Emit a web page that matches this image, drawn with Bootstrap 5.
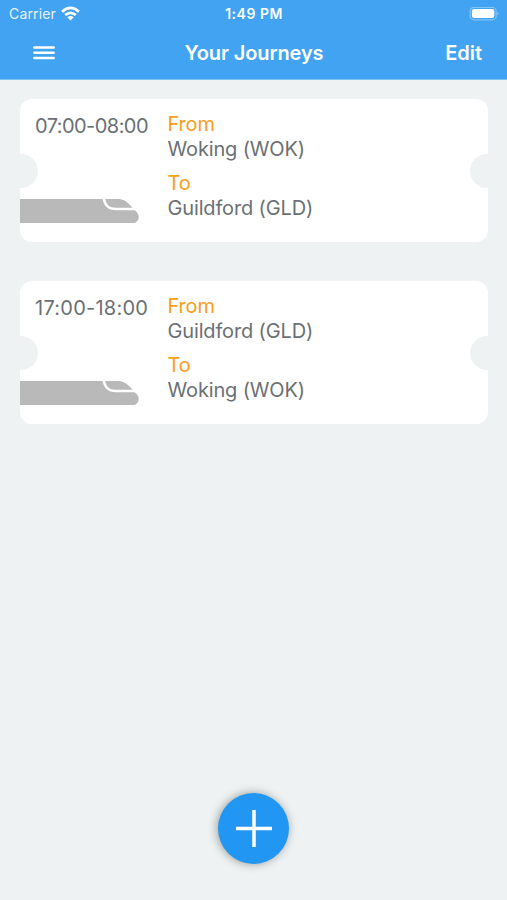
<!DOCTYPE html>
<html lang="en">
<head>
<meta charset="utf-8">
<meta name="viewport" content="width=device-width, initial-scale=1">
<title>Your Journeys</title>
<link href="https://cdn.jsdelivr.net/npm/bootstrap@5.3.0/dist/css/bootstrap.min.css" rel="stylesheet">
<style>
body{font-family:Inter,"Liberation Sans",sans-serif;background:#eef2f3;min-height:900px;color:#6b7074}
.app-header{background:#41a3f2;height:79.5px;border-bottom:1px solid #7fc0f5}
.status-bar{height:27px;padding:0 8px 0 9px;font-size:14px;line-height:27px}
.title-bar{height:51px;padding:0 25px 0 33px;font-size:20px;font-weight:600;line-height:52px}
.side{flex:1 1 0}
.carrier{letter-spacing:.15px;opacity:.88}
.clock{font-weight:600;font-size:14px;letter-spacing:.5px}
.page-title{letter-spacing:-.1px;margin-right:7px}
.edit-link{letter-spacing:-.05px}
.journeys{padding:19.5px 19px 0 20px;gap:39.4px}
.ticket{height:143px;border-radius:12px;background:#fff;overflow:hidden}
.ticket::before,.ticket::after{content:"";position:absolute;top:54.5px;width:34px;height:34px;border-radius:50%;background:#eef2f3}
.ticket::before{left:-16px}
.ticket::after{right:-16px}
.when{width:147.5px;padding:14px 0 19px}
.hours{padding-left:15px;font-size:20px;line-height:26px;letter-spacing:-.55px;white-space:nowrap}
.hours-wide{letter-spacing:.25px}
.stops{padding-top:12.5px;font-size:20px;line-height:25px;letter-spacing:-.15px}
.stops dt{color:#fb9d1c;font-weight:400}
.stops dd{margin:0 0 9.5px}
.add-btn,.add-btn:hover{width:71px;height:71px;background:#2196f3;box-shadow:-1px 0 10px rgba(0,0,0,.36)}
.add-wrap{padding-bottom:36.5px}
</style>
</head>
<body class="d-flex flex-column">
<header class="app-header text-white">
  <div class="status-bar d-flex align-items-center">
    <div class="side d-flex align-items-center"><span class="carrier">Carrier</span>
      <svg class="ms-1" width="21" height="16" viewBox="0 0 21 16" fill="none" stroke="#fff" stroke-width="2.7"><path d="M2.1 5.7Q10.500-1.900 18.900 5.700M5.200 9.100q5.300-4.600 10.600 0"/><path d="M7.300 11.300q3.200-2.500 6.400 0L10.500 14.500z" fill="#fff" stroke="none"/></svg>
    </div>
    <span class="clock">1:49 PM</span>
    <div class="side d-flex justify-content-end"><svg width="30" height="14" viewBox="0 0 30 14"><rect x="1.100" y=".400" width="26" height="12.400" rx="3.800" fill="none" stroke="#fff" stroke-opacity=".35" stroke-width="1.200"/><rect x="2.900" y="2.100" width="22.400" height="8.800" rx="2.200" fill="#fff"/><path d="M28.500 4.700q1.800 1.900 0 3.800z" fill="#fff" fill-opacity=".5"/></svg></div>
  </div>
  <div class="title-bar d-flex align-items-center">
    <div class="side d-flex"><svg width="22" height="14" viewBox="0 0 22 14" stroke="#fff" stroke-width="2.500" stroke-linecap="round"><path d="M1.300 1.500h19.400M1.300 6.700h19.400M1.300 12h19.400"/></svg></div>
    <span class="page-title">Your Journeys</span>
    <div class="side edit-link text-end">Edit</div>
  </div>
</header>
<main class="journeys d-flex flex-column">
  <section class="ticket position-relative d-flex">
    <div class="when d-flex flex-column justify-content-between">
      <div class="hours">07:00-08:00</div>
      <svg width="120" height="24" viewBox="0 0 120 24"><path d="M0 0H98C106 0 109.500 5.500 114 10.500C118 14 118.700 15.500 118.700 18.200A5.900 5.900 0 0 1 112.500 24H0z" fill="#b9b9b9"/><path d="M83.500 -1.500C85 7 88.500 10 96 10H116" fill="none" stroke="#fff" stroke-width="2.500"/></svg>
    </div>
    <dl class="stops mb-0"><dt>From</dt><dd>Woking (WOK)</dd><dt>To</dt><dd>Guildford (GLD)</dd></dl>
  </section>
  <section class="ticket position-relative d-flex">
    <div class="when d-flex flex-column justify-content-between">
      <div class="hours hours-wide">17:00-18:00</div>
      <svg width="120" height="24" viewBox="0 0 120 24"><path d="M0 0H98C106 0 109.500 5.500 114 10.500C118 14 118.700 15.500 118.700 18.200A5.900 5.900 0 0 1 112.500 24H0z" fill="#b9b9b9"/><path d="M83.500 -1.500C85 7 88.500 10 96 10H116" fill="none" stroke="#fff" stroke-width="2.500"/></svg>
    </div>
    <dl class="stops mb-0"><dt>From</dt><dd>Guildford (GLD)</dd><dt>To</dt><dd>Woking (WOK)</dd></dl>
  </section>
</main>
<div class="add-wrap mt-auto d-flex justify-content-center">
  <button class="add-btn btn border-0 rounded-circle p-0 d-flex align-items-center justify-content-center" aria-label="Add journey">
    <svg width="38" height="38" viewBox="0 0 38 38" stroke="#fff" stroke-width="3.500"><path d="M19 1v37M1 19.500h36"/></svg>
  </button>
</div>
<script src="https://cdn.jsdelivr.net/npm/bootstrap@5.3.0/dist/js/bootstrap.bundle.min.js"></script>
</body>
</html>
